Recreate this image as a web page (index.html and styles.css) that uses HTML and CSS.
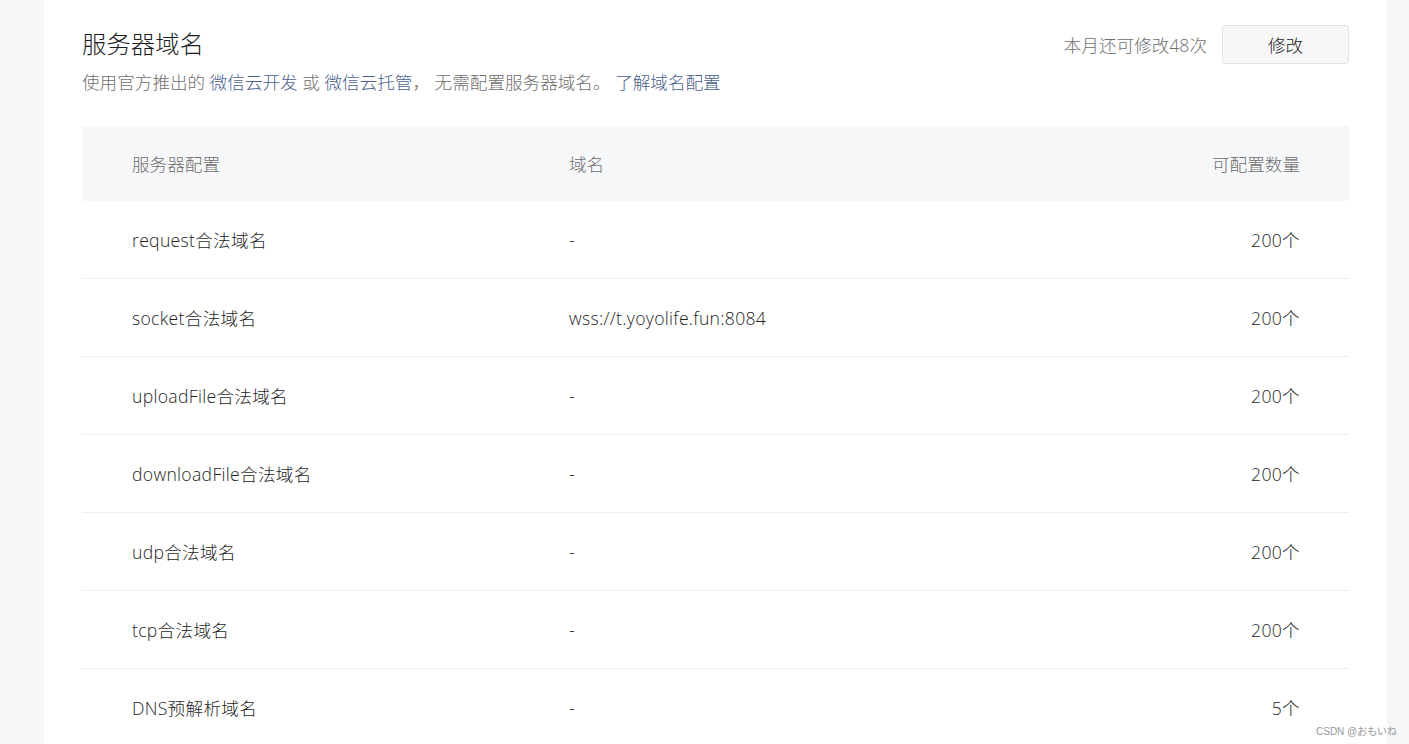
FILE: index.html
```html
<!DOCTYPE html>
<html lang="zh-CN">
<head>
<meta charset="utf-8">
<title>服务器域名</title>
<link rel="stylesheet" href="styles.css">
</head>
<body>
<div class="page">
  <div class="card">
    <div class="head">
      <div class="head-main">
        <h2 class="title">服务器域名</h2>
        <p class="desc">使用官方推出的 <a class="link" href="#">微信云开发</a> 或 <a class="link" href="#">微信云托管</a>， 无需配置服务器域名。 <a class="link" href="#">了解域名配置</a></p>
      </div>
      <div class="head-side">
        <span class="quota">本月还可修改48次</span>
        <button class="btn">修改</button>
      </div>
    </div>
    <div class="table">
      <div class="row row-head">
        <div class="c1">服务器配置</div>
        <div class="c2">域名</div>
        <div class="c3">可配置数量</div>
      </div>
      <div class="row">
        <div class="c1">request合法域名</div>
        <div class="c2">-</div>
        <div class="c3">200个</div>
      </div>
      <div class="row">
        <div class="c1">socket合法域名</div>
        <div class="c2">wss://t.yoyolife.fun:8084</div>
        <div class="c3">200个</div>
      </div>
      <div class="row">
        <div class="c1">uploadFile合法域名</div>
        <div class="c2">-</div>
        <div class="c3">200个</div>
      </div>
      <div class="row">
        <div class="c1">downloadFile合法域名</div>
        <div class="c2">-</div>
        <div class="c3">200个</div>
      </div>
      <div class="row">
        <div class="c1">udp合法域名</div>
        <div class="c2">-</div>
        <div class="c3">200个</div>
      </div>
      <div class="row">
        <div class="c1">tcp合法域名</div>
        <div class="c2">-</div>
        <div class="c3">200个</div>
      </div>
      <div class="row">
        <div class="c1">DNS预解析域名</div>
        <div class="c2">-</div>
        <div class="c3">5个</div>
      </div>
    </div>
  </div>
</div>
<div class="watermark">CSDN @おもいね</div>
</body>
</html>
```

FILE: styles.css
```css
html, body {
  margin: 0;
  padding: 0;
  background: #f6f7f9;
  font-family: "Open Sans", "Noto Sans CJK SC", sans-serif;
  font-weight: 300;
  color: #1e1e1e;
  overflow: hidden;
}

.page {
  padding-left: 44px;
  height: 744px;
}

.card {
  width: 1343px;
  box-sizing: border-box;
  background: #ffffff;
  padding: 25px 38px 0 38px;
  height: 100%;
}

.head {
  display: flex;
  justify-content: space-between;
  align-items: flex-start;
}

.title {
  margin: 0;
  font-size: 24.4px;
  font-weight: 300;
  line-height: 38px;
  color: #1e1e1e;
}

.desc {
  margin: 7px 0 0 0;
  font-size: 17.6px;
  line-height: 24px;
  color: #6f6f6f;
}

.link {
  color: #4a5f8c;
  text-decoration: none;
}

.head-side {
  display: flex;
  align-items: center;
  gap: 15px;
}

.quota {
  font-size: 17.6px;
  color: #6f6f6f;
}

.btn {
  width: 127px;
  height: 39px;
  box-sizing: border-box;
  background: #f7f7f7;
  border: 1px solid #e3e4e6;
  border-radius: 3px;
  font-family: inherit;
  font-weight: 300;
  font-size: 17.6px;
  color: #1e1e1e;
  padding: 0;
}

.table {
  margin-top: 32px;
}

.row {
  display: flex;
  align-items: center;
  height: 78px;
  box-sizing: border-box;
  padding: 0 49px 0 50px;
  border-bottom: 1px solid #eeeeee;
  font-size: 17.6px;
  letter-spacing: 0.3px;
  color: #1e1e1e;
}

.row-head {
  height: 75px;
  background: #f6f7f9;
  border-bottom: none;
  letter-spacing: 0;
  color: #6f6f6f;
}

.c1 {
  width: 437px;
  flex: none;
}

.c2 {
  flex: 1;
}

.c3 {
  text-align: right;
}

.watermark {
  position: absolute;
  left: 1316px;
  top: 723px;
  font-family: "Liberation Sans", "Noto Sans CJK JP", sans-serif;
  font-weight: 400;
  font-size: 10px;
  color: #999999;
}
```
